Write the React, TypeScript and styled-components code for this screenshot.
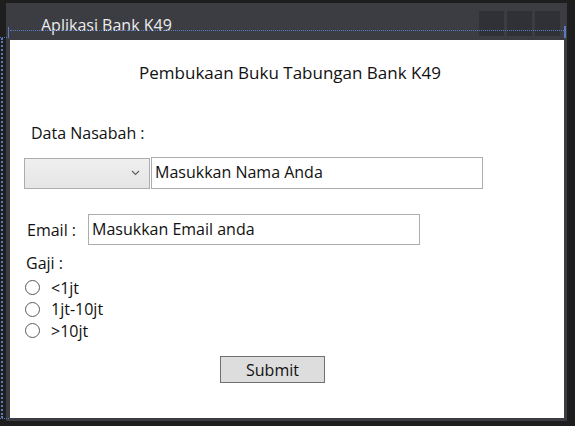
import React from "react";
import styled, { createGlobalStyle } from "styled-components";

const Global = createGlobalStyle`
  html, body { margin: 0; padding: 0; background: #1e1e1f; }
  body { width: 575px; height: 426px; overflow: hidden; font-family: "Open Sans", "Noto Sans", sans-serif; }
`;

const Desktop = styled.div`
  position: relative;
  width: 575px;
  height: 426px;
  box-sizing: border-box;
  padding: 3px 8px 5px 6px;
  background: #1e1e1f;
`;

const Window = styled.div`
  display: flex;
  flex-direction: column;
  height: 100%;
  background: #3c3d42;
  box-sizing: border-box;
  padding: 0 3px 3px 4px;
`;

const TitleBar = styled.div`
  height: 37px;
  display: flex;
  align-items: flex-start;
  justify-content: space-between;
  box-sizing: border-box;
  padding: 11px 4px 0 31px;
`;

const Title = styled.span`
  color: #ececec;
  font-size: 16px;
  line-height: 22px;
`;

const Controls = styled.div`
  display: flex;
  gap: 3px;
  margin-top: -3px;
`;

const ControlBox = styled.div`
  width: 25px;
  height: 25px;
  background: #303136;
`;

const Client = styled.div`
  flex: 1;
  background: #ffffff;
  display: flex;
  flex-direction: column;
  color: #111;
  font-size: 16px;
`;

const Heading = styled.div`
  margin-top: 22px;
  text-align: center;
  padding-left: 6px;
  line-height: 22px;
  font-size: 17px;
`;

const Label = styled.div<{ $left: number; $top: number }>`
  margin-left: ${(p) => p.$left}px;
  margin-top: ${(p) => p.$top}px;
  line-height: 22px;
`;

const Row = styled.div<{ $left: number; $top: number }>`
  display: flex;
  align-items: center;
  margin-left: ${(p) => p.$left}px;
  margin-top: ${(p) => p.$top}px;
`;

const SelectBox = styled.div`
  width: 126px;
  height: 31px;
  box-sizing: border-box;
  border: 1px solid #acacac;
  background: linear-gradient(#efefef, #e5e5e5);
  display: flex;
  align-items: center;
  justify-content: flex-end;
  padding-right: 9px;
  margin-right: 1px;
`;

const TextBox = styled.div<{ $h: number }>`
  width: 332px;
  height: ${(p) => p.$h}px;
  box-sizing: border-box;
  border: 1px solid #abadb3;
  background: #fff;
  display: flex;
  align-items: center;
  padding-left: 3px;
  padding-bottom: 2px;
  font-size: 16px;
`;

const InlineLabel = styled.span`
  width: 61px;
`;

const RadioList = styled.div`
  display: flex;
  flex-direction: column;
  margin-left: 15px;
  margin-top: 5px;
  gap: 4.5px;
`;

const RadioItem = styled.div`
  display: flex;
  align-items: center;
  height: 17px;
`;

const RadioCircle = styled.span`
  width: 15px;
  height: 15px;
  box-sizing: border-box;
  border: 1px solid #5a5a5a;
  border-radius: 50%;
  background: #fff;
  margin-right: 11px;
`;

const ButtonRow = styled.div`
  display: flex;
  margin-top: 17px;
  margin-left: 210px;
`;

const Button = styled.div`
  width: 105px;
  height: 27px;
  box-sizing: border-box;
  border: 1px solid #707070;
  background: #dddddd;
  display: flex;
  align-items: center;
  justify-content: center;
  font-size: 16px;
`;

const Adorner = styled.div`
  position: absolute;
  pointer-events: none;
`;

const HDots = styled(Adorner)`
  height: 0;
  border-top: 1px dotted #5b7cbf;
`;

const VDots = styled(Adorner)`
  width: 0;
  border-left: 2px dotted #5b7cbf;
`;

const Solid = styled(Adorner)`
  background: #5b7cbf;
`;

const Chevron = () => (
  <svg width="9" height="6" viewBox="0 0 9 6">
    <path d="M1 1 L4.5 4.5 L8 1" fill="none" stroke="#606060" strokeWidth="1.2" />
  </svg>
);

export default function App() {
  return (
    <>
      <Global />
      <Desktop>
        <Window>
          <TitleBar>
            <Title>Aplikasi Bank K49</Title>
            <Controls>
              <ControlBox />
              <ControlBox />
              <ControlBox />
            </Controls>
          </TitleBar>
          <Client>
            <Heading>Pembukaan Buku Tabungan Bank K49</Heading>
            <Label $left={21} $top={38}>Data Nasabah :</Label>
            <Row $left={14} $top={13}>
              <SelectBox>
                <Chevron />
              </SelectBox>
              <TextBox $h={32}>Masukkan Nama Anda</TextBox>
            </Row>
            <Row $left={17} $top={25}>
              <InlineLabel>Email :</InlineLabel>
              <TextBox $h={31}>Masukkan Email anda</TextBox>
            </Row>
            <Label $left={16} $top={7}>Gaji :</Label>
            <RadioList>
              <RadioItem><RadioCircle />&lt;1jt</RadioItem>
              <RadioItem><RadioCircle />1jt-10jt</RadioItem>
              <RadioItem><RadioCircle />&gt;10jt</RadioItem>
            </RadioList>
            <ButtonRow>
              <Button>Submit</Button>
            </ButtonRow>
          </Client>
        </Window>
        <HDots style={{ left: 10, top: 30, width: 554 }} />
        <Solid style={{ left: 8, top: 27, width: 1, height: 10 }} />
        <HDots style={{ left: 0, top: 37, width: 9 }} />
        <VDots style={{ left: 1, top: 38, height: 380 }} />
        <HDots style={{ left: 0, top: 418, width: 9 }} />
        <Solid style={{ left: 564, top: 26, width: 2, height: 12 }} />
      </Desktop>
    </>
  );
}
